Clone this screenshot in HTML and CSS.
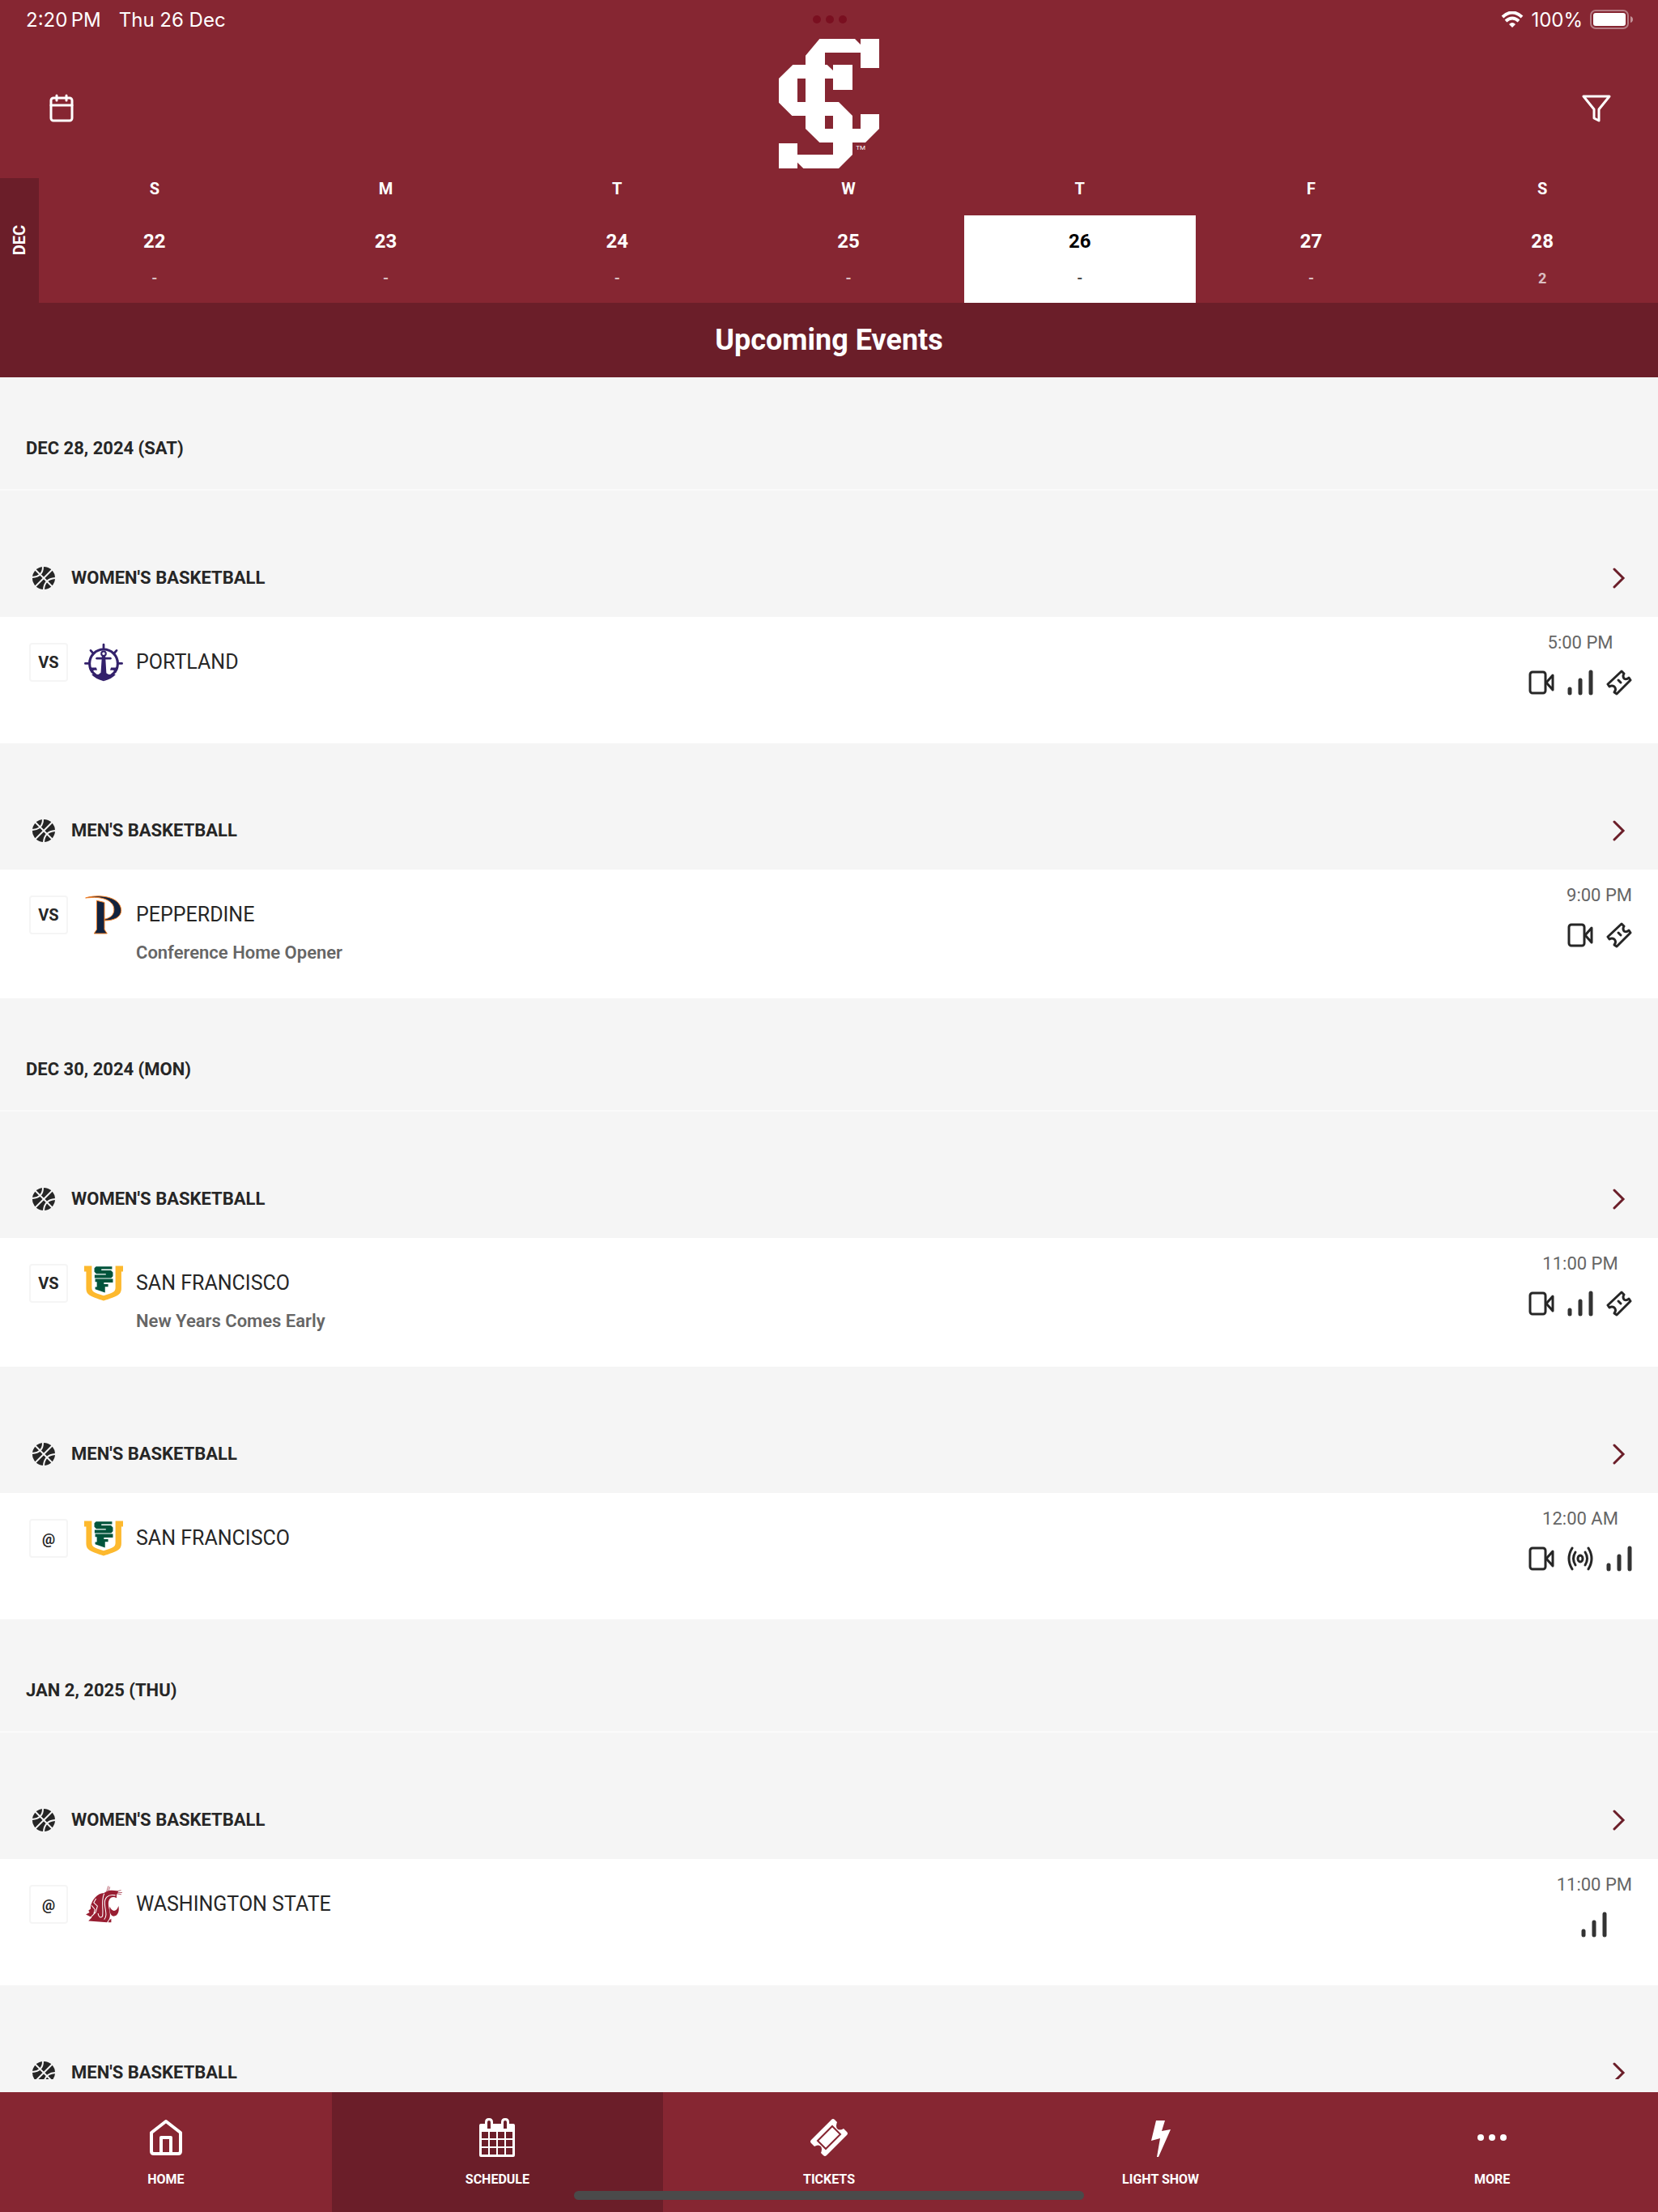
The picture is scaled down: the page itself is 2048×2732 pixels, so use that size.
FILE: index.html
```html
<!DOCTYPE html>
<html lang="en">
<head>
    <meta charset="UTF-8">
    <meta name="viewport" content="width=device-width, initial-scale=1.0">
    <title>Upcoming Events</title>
    <link rel="stylesheet" href="styles.css">
</head>
<body>

    <!-- shared icons -->
    <svg class="sprite" aria-hidden="true">
        <symbol id="ball" viewBox="0 0 28 28">
            <circle cx="14" cy="14" r="14" fill="#262626"/>
            <g fill="none" stroke="#f5f5f5" stroke-width="2">
                <path d="M3 3 L25 25"/>
                <path d="M25 3 L3 25"/>
                <path d="M13 0 Q13 12 0 13"/>
                <path d="M28 14 Q15 15 14 28"/>
            </g>
        </symbol>
        <symbol id="chevron" viewBox="0 0 16 26">
            <path d="M2 2 L13 13 L2 24" fill="none" stroke="#6b1e29" stroke-width="3" stroke-linecap="round"/>
        </symbol>
        <symbol id="video" viewBox="0 0 32 32">
            <g fill="none" stroke="#262626" stroke-width="3" stroke-linejoin="round">
                <rect x="2" y="3" width="19" height="26" rx="3"/>
                <path d="M22 16 L30 7 V25 Z"/>
            </g>
        </symbol>
        <symbol id="stats" viewBox="0 0 32 32">
            <g stroke="#333" stroke-width="5" stroke-linecap="round">
                <path d="M3 24 V29"/>
                <path d="M16 13 V29"/>
                <path d="M29 3 V29"/>
            </g>
        </symbol>
        <symbol id="ticket" viewBox="0 0 32 32">
            <g fill="none" stroke="#262626" stroke-width="3" stroke-linejoin="round" stroke-linecap="round">
                <path d="M19 2 L22 5 Q20 8 22 11 Q25 13 28 10 L30 13 L13 30 L10 28 Q13 24 10 21 Q7 19 4 21 L2 18 Z"/>
                <path d="M15 13 L18 16"/>
            </g>
        </symbol>
        <symbol id="audio" viewBox="0 0 32 32">
            <g fill="none" stroke="#262626" stroke-width="3" stroke-linecap="round">
                <ellipse cx="16" cy="16" rx="3" ry="4"/>
                <path d="M10 8 Q5 16 10 24"/>
                <path d="M22 8 Q27 16 22 24"/>
                <path d="M6 3 Q-2 16 6 29"/>
                <path d="M26 3 Q34 16 26 29"/>
            </g>
        </symbol>
        <symbol id="sf" viewBox="315 306 138 138">
            <path fill="#fdb92e" d="M315 313H342V390C342 406 352 408 384 419C416 408 426 406 426 390V313H453V333H447V392C447 418 430 420 384 437C338 420 322 418 322 392V333H315Z"/>
            <path fill="#00543c" d="M357 315H414V325H376V329H410L417 336V350L411 356H352V345H392V341H358L351 334V321Z"/>
            <path fill="#00543c" d="M354 359H417V372H385V378H400V387H389V408L354 396V388H360V370H354Z"/>
        </symbol>
    </svg>

    <div class="status-bar">
        <div class="status-left"><span>2:20&#8201;PM</span><span>Thu 26 Dec</span></div>
        <div class="status-dots"><i></i><i></i><i></i></div>
        <div class="status-right">
            <svg width="28" height="21" viewBox="0 0 28 21" aria-hidden="true">
                <path d="M2 7 Q14 -4 26 7" fill="none" stroke="#fff" stroke-width="4"/>
                <path d="M6 12 Q14 5 22 12" fill="none" stroke="#fff" stroke-width="4"/>
                <path d="M10 16 Q14 12 18 16 L14 20 Z" fill="#fff"/>
            </svg>
            <span>100%</span>
            <svg width="54" height="24" viewBox="0 0 54 24" aria-hidden="true">
                <rect x="1" y="1" width="46" height="22" rx="6" fill="none" stroke="#fff" stroke-opacity="0.4" stroke-width="2"/>
                <rect x="4" y="4" width="40" height="16" rx="3" fill="#fff"/>
                <path d="M50 8 Q53 9 53 12 Q53 15 50 16 Z" fill="#fff" fill-opacity="0.5"/>
            </svg>
        </div>
    </div>

    <header class="header">
        <button class="icon-button" aria-label="Calendar">
            <svg width="36" height="36" viewBox="0 0 36 36">
                <g fill="none" stroke="#fff" stroke-width="3" stroke-linecap="round">
                    <rect x="5" y="5" width="26" height="28" rx="3"/>
                    <path d="M5 14 H31 M12 2 V8 M24 2 V8"/>
                </g>
            </svg>
        </button>
        <svg class="logo" viewBox="186 144 372 480" role="img" aria-label="Team logo">
            <path fill="#fff" d="M337 144H468L489 165V144H558V252H489V195H357V477H489V423H558V477L507 528H337L285 477V206Z"/>
            <path fill="#fff" d="M238 240H365L387 261V240H459V333H387V291H255V378H408L459 429V573L408 624H277L255 602V624H186V531H255V573H387V429H235L186 380V291Z"/>
            <text class="logo-tm" x="472" y="555">TM</text>
        </svg>
        <button class="icon-button" aria-label="Filter">
            <svg width="36" height="36" viewBox="0 0 36 36">
                <path d="M2 3 H34 L21 19 V33 L15 30 V19 Z" fill="none" stroke="#fff" stroke-width="3" stroke-linejoin="round"/>
            </svg>
        </button>
    </header>

    <div class="calendar">
        <div class="month"><span>DEC</span></div>
        <div class="week">
            <div class="day"><span class="weekday">S</span><button class="date">22<small>-</small></button></div>
            <div class="day"><span class="weekday">M</span><button class="date">23<small>-</small></button></div>
            <div class="day"><span class="weekday">T</span><button class="date">24<small>-</small></button></div>
            <div class="day"><span class="weekday">W</span><button class="date">25<small>-</small></button></div>
            <div class="day"><span class="weekday">T</span><button class="date selected">26<small>-</small></button></div>
            <div class="day"><span class="weekday">F</span><button class="date">27<small>-</small></button></div>
            <div class="day"><span class="weekday">S</span><button class="date">28<small>2</small></button></div>
        </div>
    </div>

    <h1 class="title">Upcoming Events</h1>

    <main class="events">
        <div class="list">
            <h2 class="event-date">DEC 28, 2024 (SAT)</h2>

            <a class="sport" href="#"><svg class="ball"><use href="#ball"/></svg>WOMEN'S BASKETBALL<svg class="chevron"><use href="#chevron"/></svg></a>
            <div class="game">
                <span class="place">VS</span>
                <svg class="team-logo" viewBox="315 884 138 138" aria-hidden="true">
                    <g fill="none" stroke="#33216b" stroke-linecap="round">
                        <circle cx="384" cy="957" r="50" stroke-width="9"/>
                        <path stroke-width="8" d="M384 890V904M319 957H330M438 957H449M338 911L346 920M430 911L422 920"/>
                        <circle cx="384" cy="922" r="8" stroke-width="6"/>
                        <path stroke-width="8" d="M360 939H408"/>
                    </g>
                    <path fill="#33216b" d="M378 930H390L394 996L384 1020Q352 1010 341 996L366 996L374 990Z"/>
                    <path fill="#33216b" d="M384 1020Q416 1010 427 996H402L390 990ZM331 972H358L361 981H350L340 990ZM437 972H410L407 981H418L428 990Z"/>
                </svg>
                <div class="team"><span class="team-name">PORTLAND</span></div>
                <div class="info">
                    <span class="time">5:00 PM</span>
                    <div class="links">
                        <a href="#" aria-label="Video"><svg><use href="#video"/></svg></a>
                        <a href="#" aria-label="Stats"><svg><use href="#stats"/></svg></a>
                        <a href="#" aria-label="Tickets"><svg><use href="#ticket"/></svg></a>
                    </div>
                </div>
            </div>

            <a class="sport" href="#"><svg class="ball"><use href="#ball"/></svg>MEN'S BASKETBALL<svg class="chevron"><use href="#chevron"/></svg></a>
            <div class="game">
                <span class="place">VS</span>
                <svg class="team-logo" viewBox="313 377 144 146" aria-hidden="true">
                    <g fill="#12233f" stroke="#f58025" stroke-width="3">
                        <path d="M317 386C360 372 449 377 451 433C451 460 420 472 388 471V466C410 462 424 450 424 430C424 402 395 385 350 384Z"/>
                        <path d="M359 396L388 403V505L398 520H349L359 505Z"/>
                    </g>
                </svg>
                <div class="team"><span class="team-name">PEPPERDINE</span><span class="note">Conference Home Opener</span></div>
                <div class="info">
                    <span class="time">9:00 PM</span>
                    <div class="links">
                        <a href="#" aria-label="Video"><svg><use href="#video"/></svg></a>
                        <a href="#" aria-label="Tickets"><svg><use href="#ticket"/></svg></a>
                    </div>
                </div>
            </div>

            <h2 class="event-date">DEC 30, 2024 (MON)</h2>

            <a class="sport" href="#"><svg class="ball"><use href="#ball"/></svg>WOMEN'S BASKETBALL<svg class="chevron"><use href="#chevron"/></svg></a>
            <div class="game">
                <span class="place">VS</span>
                <svg class="team-logo"><use href="#sf"/></svg>
                <div class="team"><span class="team-name">SAN FRANCISCO</span><span class="note">New Years Comes Early</span></div>
                <div class="info">
                    <span class="time">11:00 PM</span>
                    <div class="links">
                        <a href="#" aria-label="Video"><svg><use href="#video"/></svg></a>
                        <a href="#" aria-label="Stats"><svg><use href="#stats"/></svg></a>
                        <a href="#" aria-label="Tickets"><svg><use href="#ticket"/></svg></a>
                    </div>
                </div>
            </div>

            <a class="sport" href="#"><svg class="ball"><use href="#ball"/></svg>MEN'S BASKETBALL<svg class="chevron"><use href="#chevron"/></svg></a>
            <div class="game">
                <span class="place at">@</span>
                <svg class="team-logo"><use href="#sf"/></svg>
                <div class="team"><span class="team-name">SAN FRANCISCO</span></div>
                <div class="info">
                    <span class="time">12:00 AM</span>
                    <div class="links">
                        <a href="#" aria-label="Video"><svg><use href="#video"/></svg></a>
                        <a href="#" aria-label="Audio"><svg><use href="#audio"/></svg></a>
                        <a href="#" aria-label="Stats"><svg><use href="#stats"/></svg></a>
                    </div>
                </div>
            </div>

            <h2 class="event-date">JAN 2, 2025 (THU)</h2>

            <a class="sport" href="#"><svg class="ball"><use href="#ball"/></svg>WOMEN'S BASKETBALL<svg class="chevron"><use href="#chevron"/></svg></a>
            <div class="game">
                <span class="place at">@</span>
                <svg class="team-logo" viewBox="315 327 138 138" aria-hidden="true">
                    <path fill="#981e32" d="M338 402C345 378 360 358 385 356L395 350C405 345 420 346 430 348L436 351L430 362V374C415 364 402 374 401 392C400 412 412 430 404 448L396 460L330 455L342 443L321 432L334 425L330 418L338 412Z"/>
                    <path fill="#981e32" d="M437 402C441 425 432 440 417 438C408 434 403 420 406 404C413 424 430 424 437 402ZM404 452L411 447V460H400Z"/>
                    <path fill="none" stroke="#981e32" stroke-width="2" d="M395 350L401 331M401 350L406 334M430 350L446 346M432 355L450 354M430 358L447 361"/>
                    <path fill="none" stroke="#fff" stroke-width="3" d="M341 400L353 414L349 430M357 376L349 390L362 402L356 424L330 450M386 358C374 384 384 412 380 438C374 446 366 442 364 428M426 364C398 358 386 374 388 396C390 420 398 436 386 450"/>
                </svg>
                <div class="team"><span class="team-name">WASHINGTON STATE</span></div>
                <div class="info">
                    <span class="time">11:00 PM</span>
                    <div class="links">
                        <a href="#" aria-label="Stats"><svg><use href="#stats"/></svg></a>
                    </div>
                </div>
            </div>

            <a class="sport" href="#"><svg class="ball"><use href="#ball"/></svg>MEN'S BASKETBALL<svg class="chevron"><use href="#chevron"/></svg></a>
        </div>
    </main>

    <nav class="tabs">
        <a class="tab" href="#">
            <svg viewBox="0 0 48 48"><g fill="none" stroke="#fff" stroke-width="4" stroke-linejoin="round"><path d="M24 4L42 18V41Q42 44 39 44H9Q6 44 6 41V18Z"/><path d="M18 44V24H30V44"/></g></svg>
            HOME
        </a>
        <a class="tab active" href="#">
            <svg viewBox="0 0 48 48">
                <path fill="#fff" d="M4 7H9V5Q9 0 14 0Q19 0 19 5V7H29V5Q29 0 34 0Q39 0 39 5V7H44Q46 7 46 9V46Q46 48 44 48H4Q2 48 2 46V9Q2 7 4 7Z"/>
                <path fill="#6b1e29" d="M5 17H13V25H5ZM15 17H23V25H15ZM25 17H33V25H25ZM35 17H43V25H35ZM5 27H13V35H5ZM15 27H23V35H15ZM25 27H33V35H25ZM35 27H43V35H35ZM5 37H13V45H5ZM15 37H23V45H15ZM25 37H33V45H25ZM35 37H43V45H35ZM12 5Q12 3 14 3Q16 3 16 5V13H12ZM32 5Q32 3 34 3Q36 3 36 5V13H32Z"/>
            </svg>
            SCHEDULE
        </a>
        <a class="tab" href="#">
            <svg viewBox="0 0 48 48">
                <path fill="#fff" d="M27 2Q29 0 31 2L34 5Q32 10 34 13Q37 16 42 13L46 17Q48 19 46 21L21 46Q19 48 17 46L14 43Q16 38 14 35Q11 32 6 35L2 31Q0 29 2 27Z"/>
                <path fill="none" stroke="#862632" stroke-width="2" d="M28 10L38 20L20 38L10 28Z"/>
            </svg>
            TICKETS
        </a>
        <a class="tab" href="#">
            <svg viewBox="0 0 48 48"><path fill="#fff" d="M18 3H29L25 16L36 14L21 48H19L23 25L12 28Z"/></svg>
            LIGHT SHOW
        </a>
        <a class="tab" href="#">
            <svg viewBox="0 0 48 48"><g fill="#fff"><circle cx="10" cy="24" r="4"/><circle cx="24" cy="24" r="4"/><circle cx="38" cy="24" r="4"/></g></svg>
            MORE
        </a>
        <div class="home-indicator"></div>
    </nav>

</body>
</html>
```
FILE: styles.css
```css
* {
    box-sizing: border-box;
}

body {
    display: flex;
    flex-direction: column;
    height: 100vh;
    margin: 0;
    background: #f5f5f5;
    color: #262626;
    font-family: Roboto, sans-serif;
}

button {
    padding: 0;
    border: none;
    background: none;
    color: inherit;
    font: inherit;
    cursor: pointer;
}

a {
    color: inherit;
    text-decoration: none;
}

svg {
    display: block;
}

.sprite {
    display: none;
}

/* top */
.status-bar {
    display: grid;
    grid-template-columns: 1fr auto 1fr;
    align-items: center;
    height: 48px;
    padding: 0 30px 0 32px;
    background: #862632;
    color: #fff;
    font-family: Inter, sans-serif;
    font-size: 24px;
}

.status-left {
    display: flex;
    gap: 22px;
}

.status-dots {
    display: flex;
    gap: 6px;
}

.status-dots i {
    width: 10px;
    height: 10px;
    border-radius: 50%;
    background: #7a0f20;
}

.status-right {
    display: flex;
    justify-content: flex-end;
    align-items: center;
    gap: 9px;
}

.header {
    display: flex;
    justify-content: space-between;
    align-items: center;
    height: 172px;
    padding: 0 58px;
    background: #862632;
}

.logo {
    width: 124px;
    height: 160px;
    margin-bottom: 12px;
}

.logo-tm {
    fill: #fff;
    font-size: 24px;
}

.calendar {
    display: flex;
    background: #862632;
    color: #fff;
    font-weight: 700;
}

.month {
    display: flex;
    justify-content: center;
    align-items: center;
    width: 48px;
    background: #6b1e29;
    font-size: 20px;
}

.month span {
    writing-mode: vertical-rl;
    transform: rotate(180deg);
}

.week {
    display: grid;
    grid-template-columns: repeat(7, 1fr);
    flex: 1;
}

.day {
    text-align: center;
}

.weekday {
    display: block;
    height: 46px;
    font-size: 20px;
    line-height: 26px;
}

.date {
    display: block;
    width: 100%;
    height: 108px;
    font-size: 24px;
    line-height: 32px;
}

.date small {
    display: block;
    margin-top: 16px;
    font-size: 18px;
    line-height: 28px;
    opacity: 0.7;
}

.date.selected {
    background: #fff;
    color: #000;
}

.title {
    margin: 0;
    background: #6b1e29;
    color: #fff;
    font-size: 36px;
    line-height: 92px;
    text-align: center;
}

/* events */
.events {
    flex: 1;
    min-height: 0;
    padding-bottom: 16px;
}

.list {
    height: 100%;
    overflow: hidden;
}

.event-date {
    height: 140px;
    margin: 0;
    padding: 72px 32px 0;
    border-bottom: 2px solid #fafafa;
    font-size: 22px;
    line-height: 32px;
}

.sport {
    display: flex;
    align-items: center;
    height: 156px;
    padding: 59px 40px 0;
    font-size: 22px;
    font-weight: 700;
    line-height: 18px;
}

.ball {
    width: 28px;
    height: 28px;
    margin-right: 20px;
}

.chevron {
    width: 16px;
    height: 26px;
    margin-left: auto;
}

.game {
    display: flex;
    align-items: flex-start;
    min-height: 156px;
    padding: 32px 32px 40px 36px;
    background: #fff;
}

.place {
    display: flex;
    justify-content: center;
    align-items: center;
    width: 48px;
    height: 48px;
    border: 2px solid #f5f5f5;
    border-radius: 4px;
    font-size: 20px;
    font-weight: 700;
}

.place.at {
    font-size: 18px;
}

.team-logo {
    width: 48px;
    height: 48px;
    margin: 0 16px 0 20px;
}

.team {
    flex: 1;
}

.team-name {
    display: block;
    font-size: 25px;
    line-height: 48px;
}

.note {
    display: block;
    margin-top: 7px;
    color: #666;
    font-size: 22px;
    font-weight: 600;
    line-height: 32px;
}

.info {
    display: flex;
    flex-direction: column;
    align-items: center;
    margin-top: -16px;
}

.time {
    color: #666;
    font-size: 22px;
    line-height: 32px;
}

.links {
    display: flex;
    gap: 16px;
    margin-top: 17px;
}

.links svg {
    width: 32px;
    height: 32px;
}

/* bottom tabs */
.tabs {
    position: relative;
    display: grid;
    grid-template-columns: repeat(5, 1fr);
    height: 148px;
    background: #862632;
}

.tab {
    display: flex;
    flex-direction: column;
    align-items: center;
    gap: 18px;
    padding-top: 32px;
    color: #fff;
    font-size: 16px;
    font-weight: 700;
    line-height: 20px;
}

.tab svg {
    width: 48px;
    height: 48px;
}

.tab.active {
    background: #6b1e29;
}

.home-indicator {
    position: absolute;
    bottom: 15px;
    left: 50%;
    width: 630px;
    height: 11px;
    border-radius: 6px;
    background: #4a4a4a;
    transform: translateX(-50%);
}
```
